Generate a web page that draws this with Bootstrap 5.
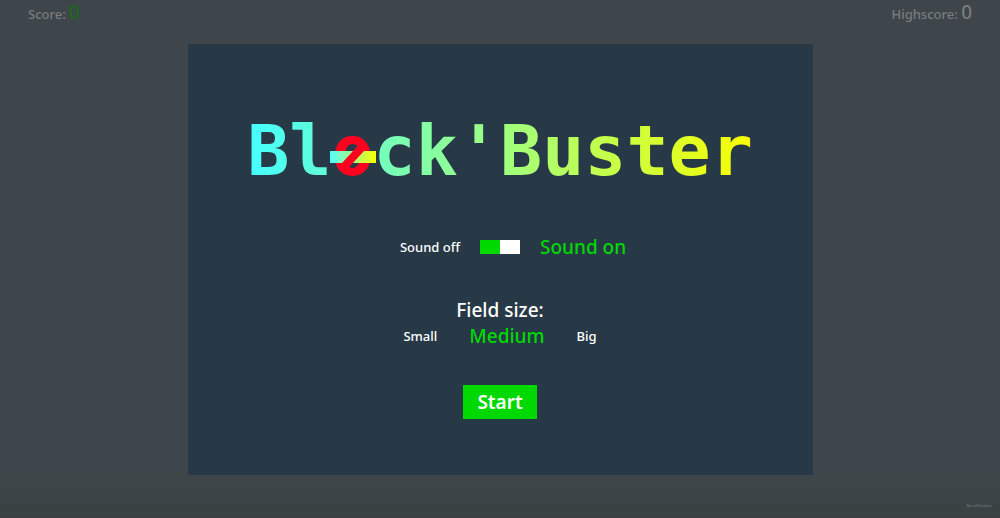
<!DOCTYPE html>
<html lang="en">
<head>
<meta charset="utf-8">
<meta name="viewport" content="width=device-width, initial-scale=1">
<title>Bløck'Buster</title>
<link href="https://cdn.jsdelivr.net/npm/bootstrap@5.3.0/dist/css/bootstrap.min.css" rel="stylesheet">
<style>
  :root { --go: #00d900; --panel: #273947; --fade: #7a7c7d; }
  body { font-family: "Noto Sans", sans-serif; font-size: 13px; line-height: 20px; font-weight: 500; color: #fff;
    background: linear-gradient(#3e464b calc(100% - 48px), #3b4243 calc(100% - 4px), #3c3e41); }
  .scores { color: var(--fade); height: 24px; }
  .score-value { font-size: 19px; line-height: 26px; }
  .score-value.current { color: #1c691c; }
  .menu { width: 62.5%; background: var(--panel); margin-top: 20px; padding: 67px 0 56px; }
  .game-title { font: 700 70px/80px "DejaVu Sans Mono", monospace; }
  .fill { background: linear-gradient(90deg, #45ffff, #f9ff00); -webkit-background-clip: text; background-clip: text; color: transparent; }
  .struck { position: relative; color: #ff001f; }
  .struck svg { position: absolute; left: 50%; bottom: 15px; width: 46px; height: 40px; transform: translateX(-50%); }
  .sound { display: grid; grid-template-columns: 1fr auto 1fr; gap: 20px; margin-top: 44px; }
  .switch { appearance: none; width: 40px; height: 14px; margin: 0; background: linear-gradient(90deg, var(--go) 50%, #fff 50%); cursor: pointer; }
  .large { font-size: 19px; line-height: 26px; }
  .active-choice, .btn-check:checked + .choice { color: var(--go); font-size: 19px; }
  .choice { cursor: pointer; line-height: 26px; }
  .active-choice { line-height: 24px; }
  .sizes { margin-top: 38px; }
  .choices { gap: 32px; }
  .start { background: var(--go); color: #fff; font-size: 19px; line-height: 24px; font-weight: 600; padding: 5px 14px; margin-top: 36px; }
  .start:hover { background: #00b800; color: #fff; }
  .credit { font-size: 4px; line-height: 8px; color: #70777b; }
</style>
</head>
<body class="min-vh-100 d-flex flex-column">
<header class="scores d-flex justify-content-between align-items-center px-4 mx-1">
  <div>Score: <span class="score-value current">0</span></div>
  <div>Highscore: <span class="score-value">0</span></div>
</header>
<main class="menu mx-auto d-flex flex-column align-items-center">
  <h1 class="game-title fill m-0 text-nowrap">Bl<span class="struck">o<svg viewBox="0 0 46 40" aria-hidden="true">
    <defs><linearGradient id="bar"><stop stop-color="#55ffff"/><stop offset="1" stop-color="#f9ff00"/></linearGradient></defs>
    <path d="M0 14h46v12H0z" fill="url(#bar)"/>
    <path d="M12 32 34 8" stroke="#ff001f" stroke-width="8"/>
  </svg></span>ck'Buster</h1>
  <div class="sound align-items-center">
    <label class="text-end" for="sound">Sound off</label>
    <input class="switch" type="checkbox" role="switch" id="sound" checked>
    <label class="active-choice" for="sound">Sound on</label>
  </div>
  <fieldset class="sizes">
    <legend class="large text-center m-0">Field size:</legend>
    <div class="choices d-flex align-items-center">
      <div><input class="btn-check" type="radio" name="size" id="small"><label class="choice" for="small">Small</label></div>
      <div><input class="btn-check" type="radio" name="size" id="medium" checked><label class="choice" for="medium">Medium</label></div>
      <div><input class="btn-check" type="radio" name="size" id="big"><label class="choice" for="big">Big</label></div>
    </div>
  </fieldset>
  <button class="start btn rounded-0 border-0" type="button">Start</button>
</main>
<footer class="mt-auto d-flex justify-content-end px-2 pb-2"><a class="credit text-decoration-none" href="#">BrookStudios</a></footer>
<script src="https://cdn.jsdelivr.net/npm/bootstrap@5.3.0/dist/js/bootstrap.bundle.min.js"></script>
</body>
</html>
